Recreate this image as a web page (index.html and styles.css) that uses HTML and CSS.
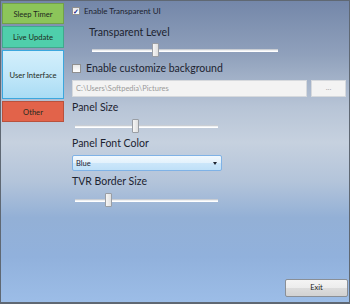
FILE: index.html
```html
<!DOCTYPE html>
<html lang="en">

<head>
  <meta charset="UTF-8">
  <meta name="viewport" content="width=device-width, initial-scale=1.0">
  <title>Settings</title>
  <link rel="stylesheet" href="styles.css">
</head>

<body>
  <div class="window">
    <div class="nav">
      <div class="nav-btn sleep">Sleep Timer</div>
      <div class="nav-btn update">Live Update</div>
      <div class="nav-btn ui">User Interface</div>
      <div class="nav-btn other">Other</div>
    </div>

    <div class="content">
      <label class="check-row small">
        <span class="checkbox checked">&#10003;</span>
        Enable Transparent UI
      </label>

      <div class="label indent">Transparent Level</div>
      <div class="slider wide">
        <div class="track"></div>
        <div class="thumb" style="left: 60px;"></div>
      </div>

      <label class="check-row big">
        <span class="checkbox"></span>
        Enable customize background
      </label>

      <div class="path-row">
        <div class="path-box">C:\Users\Softpedia\Pictures</div>
        <div class="browse-btn">...</div>
      </div>

      <div class="label">Panel Size</div>
      <div class="slider">
        <div class="track"></div>
        <div class="thumb" style="left: 57px;"></div>
      </div>

      <div class="label">Panel Font Color</div>
      <div class="combo">
        <span>Blue</span>
        <span class="arrow"></span>
      </div>

      <div class="label tvr">TVR Border Size</div>
      <div class="slider">
        <div class="track"></div>
        <div class="thumb" style="left: 30px;"></div>
      </div>

      <div class="footer">
        <div class="exit-btn">Exit</div>
      </div>
    </div>
  </div>
</body>

</html>
```

FILE: styles.css
```css
* {
  margin: 0;
  padding: 0;
  box-sizing: border-box;
}

body {
  font-family: Lato, 'Open Sans', sans-serif;
  color: #1c2330;
  width: 350px;
  height: 304px;
  overflow: hidden;
}

.window {
  display: flex;
  width: 350px;
  height: 304px;
  border: 1px solid #5f6873;
  border-bottom-width: 2px;
  background: linear-gradient(180deg, #7487a9 0%, #90a1bc 18%, #b7c4d6 35%, #c6d1df 47%, #b3c4da 60%, #93b0d6 72%, #91b1dc 85%, #9cbde7 100%);
}

.nav {
  width: 63px;
  padding: 2px 0 0 1px;
  display: flex;
  flex-direction: column;
  gap: 2px;
}

.nav-btn {
  display: flex;
  align-items: center;
  justify-content: center;
  font-size: 7.6px;
  color: #1e2a20;
  border: 1px solid rgba(0, 0, 0, 0.18);
}

.nav-btn.sleep {
  height: 21px;
  background: #8cc55a;
}

.nav-btn.update {
  height: 22px;
  background: #4fcfab;
}

.nav-btn.ui {
  height: 49px;
  background: linear-gradient(180deg, #d3effb 0%, #bde5f8 60%, #a9dcf4 100%);
  border-color: #3ba7de;
}

.nav-btn.other {
  height: 21px;
  background: #e2634a;
}

.content {
  flex: 1;
  padding-left: 8px;
  display: flex;
  flex-direction: column;
}

.check-row {
  display: flex;
  align-items: center;
  gap: 4px;
}

.check-row.small {
  margin-top: 3px;
  height: 14px;
  font-size: 8px;
}

.check-row.big {
  margin-top: 3px;
  height: 16px;
  font-size: 10.5px;
}

.checkbox {
  width: 8px;
  height: 8px;
  border: 1px solid #8f8f8f;
  background: linear-gradient(180deg, #e8e8e8, #ffffff);
  font-size: 7px;
  line-height: 6px;
  color: #1a2a8c;
  text-align: center;
  font-weight: bold;
}

.check-row.big .checkbox {
  width: 9px;
  height: 9px;
  margin-right: 1px;
}

.label {
  height: 16px;
  line-height: 16px;
  font-size: 10.5px;
  margin-top: 2px;
}

.label.indent {
  margin-top: 6px;
  padding-left: 17px;
}

.label.tvr {
  margin-top: 2px;
}

.slider {
  position: relative;
  width: 143px;
  height: 14px;
  margin: 4px 0 0 3px;
}

.slider.wide {
  width: 186px;
  margin: 3px 0 0 20px;
}

.track {
  position: absolute;
  left: 0;
  right: 0;
  top: 6px;
  height: 3px;
  background: #eef0f2;
  border-top: 1px solid #c9cdd3;
  border-bottom: 1px solid #ffffff;
}

.thumb {
  position: absolute;
  top: 0;
  width: 7px;
  height: 14px;
  border: 1px solid #9a9ea4;
  border-radius: 1px;
  background: linear-gradient(90deg, #f5f5f5, #e0e0e0);
}

.path-row {
  display: flex;
  gap: 4px;
  margin-top: 4px;
  height: 17px;
}

.path-box {
  width: 235px;
  background: #f3f3f3;
  border: 1px solid #d6d9dd;
  font-size: 7.5px;
  color: #9a9a9a;
  line-height: 15px;
  padding-left: 3px;
}

.browse-btn {
  width: 35px;
  background: #f3f3f3;
  border: 1px solid #d6d9dd;
  font-size: 8px;
  color: #a8a8a8;
  text-align: center;
  line-height: 13px;
}

.combo {
  display: flex;
  align-items: center;
  justify-content: space-between;
  width: 150px;
  height: 16px;
  margin-top: 4px;
  padding: 0 4px 0 3px;
  border: 1px solid #7fb2e6;
  border-radius: 2px;
  background: linear-gradient(180deg, #f2f9fe 0%, #e2f1fc 50%, #cbe6fa 52%, #bfe0f8 100%);
  font-size: 7.5px;
}

.arrow {
  width: 0;
  height: 0;
  border-left: 2.5px solid transparent;
  border-right: 2.5px solid transparent;
  border-top: 3px solid #1c2330;
}

.footer {
  flex: 1;
  display: flex;
  justify-content: flex-end;
  align-items: flex-end;
  padding: 0 1px 5px 0;
}

.exit-btn {
  width: 63px;
  height: 18px;
  border: 1px solid #8a8f96;
  border-radius: 2px;
  background: linear-gradient(180deg, #f4f4f4 0%, #ececec 50%, #dcdcdc 52%, #d2d2d2 100%);
  font-size: 7.5px;
  text-align: center;
  line-height: 16px;
  color: #202020;
}
```
